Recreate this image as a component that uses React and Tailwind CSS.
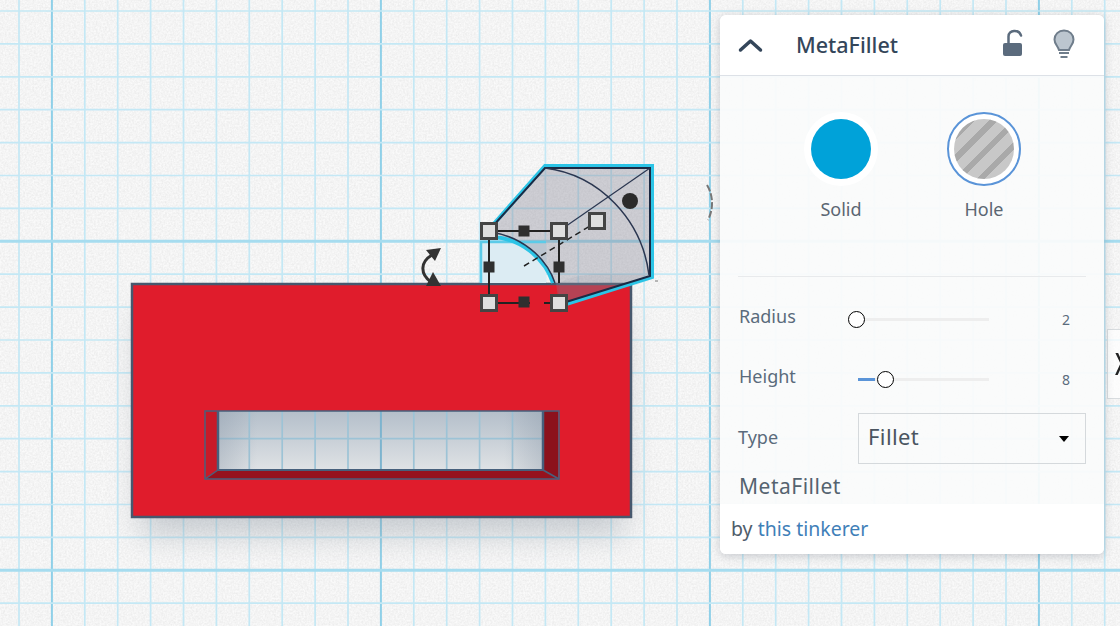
import React from 'react';

const font = { fontFamily: '"Noto Sans", "Open Sans", sans-serif' };

const vLines = Array.from({ length: 35 }, (_, i) => 19 + i * 32.9);
const hLines = Array.from({ length: 19 }, (_, i) => 11 + i * 32.9);

function GridLines({ minor = '#c4e8f5', major = '#8fd0e8' }) {
  return (
    <g filter="url(#soft)">
      {vLines.map((x, i) => (
        <line key={x} x1={x} y1="0" x2={x} y2="626" stroke={i % 10 === 1 ? major : minor} strokeWidth={i % 10 === 1 ? 2 : 1.7} />
      ))}
      {hLines.map((y, i) => (
        <line key={y} x1="0" y1={y} x2="1120" y2={y} stroke={i % 10 === 7 ? '#a6dcef' : minor} strokeWidth={i % 10 === 7 ? 3 : 1.7} />
      ))}
    </g>
  );
}

function Handle({ x, y }) {
  return <rect x={x - 7.5} y={y - 7.5} width="15" height="15" fill="#dedede" stroke="#444" strokeWidth="3" />;
}

function Dot({ x, y }) {
  return <rect x={x - 5.5} y={y - 5.5} width="11" height="11" fill="#2f2f2f" />;
}

function Workplane() {
  return (
    <svg className="absolute inset-0" width="1120" height="626" viewBox="0 0 1120 626">
      <defs>
        <filter id="soft"><feGaussianBlur stdDeviation="0.7" /></filter>
        <filter id="shadow" x="-20%" y="-20%" width="140%" height="140%"><feGaussianBlur stdDeviation="16" /></filter>
        <filter id="blur1"><feGaussianBlur stdDeviation="0.4" /></filter>
        <filter id="noise" x="0" y="0" width="100%" height="100%">
          <feTurbulence type="fractalNoise" baseFrequency="0.55" numOctaves="2" seed="4" />
          <feColorMatrix values="0 0 0 0 0.6  0 0 0 0 0.6  0 0 0 0 0.6  0.5 0 0 0 -0.12" />
        </filter>
        <linearGradient id="holeFill" x1="0" y1="0" x2="0" y2="1">
          <stop offset="0" stopColor="#b4bfca" />
          <stop offset="1" stopColor="#dfe2e5" />
        </linearGradient>
        <linearGradient id="holeEdge" x1="0" y1="0" x2="1" y2="0">
          <stop offset="0" stopColor="#8594a5" stopOpacity="0.35" />
          <stop offset="0.12" stopColor="#8594a5" stopOpacity="0" />
          <stop offset="0.88" stopColor="#8594a5" stopOpacity="0" />
          <stop offset="1" stopColor="#8594a5" stopOpacity="0.35" />
        </linearGradient>
        <clipPath id="holeClip"><rect x="218" y="411" width="325" height="59" /></clipPath>
        <clipPath id="quarterClip"><rect x="479" y="240" width="67" height="43" /></clipPath>
      </defs>

      <rect width="1120" height="626" fill="#fafafa" />
      <rect width="1120" height="626" filter="url(#noise)" />
      <GridLines />

      {/* soft shadow under the box */}
      <rect x="140" y="310" width="485" height="225" fill="#7a8794" opacity="0.38" filter="url(#shadow)" />

      {/* red box */}
      <rect x="132" y="284" width="499" height="233" fill="#e01c2c" stroke="#47586e" strokeWidth="2.5" />

      {/* slot */}
      <rect x="218" y="411" width="325" height="59" fill="url(#holeFill)" />
      <g clipPath="url(#holeClip)">
        <GridLines minor="#9dc3d6" major="#7db4cf" />
        <rect x="218" y="411" width="325" height="59" fill="url(#holeEdge)" />
      </g>
      <polygon points="206,411 218,411 218,470 206,479" fill="#c81a28" />
      <polygon points="543,411 558,411 558,479 543,470" fill="#8c111c" />
      <polygon points="218,470 543,470 558,479 206,479" fill="#96121e" />
      <g fill="none" stroke="#47607c" strokeWidth="1.5" filter="url(#blur1)">
        <rect x="205" y="411" width="354" height="68" />
        <line x1="218" y1="411" x2="218" y2="470" strokeWidth="2.5" />
        <line x1="543" y1="411" x2="543" y2="470" strokeWidth="2.5" />
        <line x1="218" y1="470" x2="543" y2="470" strokeWidth="2" />
        <line x1="218" y1="470" x2="205" y2="479" />
        <line x1="543" y1="470" x2="559" y2="479" />
      </g>

      {/* fillet shape */}
      <rect x="480" y="242" width="66" height="41" fill="#dcecf3" />
      <polygon points="545,167 650,167 650,276 559,304 556,283 545,262 525,246 489,231" fill="#7c7c8c" opacity="0.34" />
      <path d="M559,283 C585,270 610,275 649,275 L650,276 L559,304 Z" fill="#7a7f90" opacity="0.1" />
      <path d="M481,283 V242 H546" fill="none" stroke="#5ccbe8" strokeWidth="2.5" clipPath="url(#quarterClip)" />
      <path d="M493,237 C520,238 545,258 553,283" fill="none" stroke="#2cc4e6" strokeWidth="4" />
      <path d="M492,226 L545,166 H652 V277 L566,304" fill="none" stroke="#2cc4e6" strokeWidth="4" />
      <path d="M493,226 L545,168 H650 V276 L566,302" fill="none" stroke="#1b2a44" strokeWidth="2" />
      <path d="M545,168 C600,175 642,220 649,275" fill="none" stroke="#2a3650" strokeWidth="1.5" />
      <path d="M490,232 C520,236 546,256 555,283" fill="none" stroke="#2a3650" strokeWidth="1.5" />
      <line x1="559" y1="231" x2="650" y2="168" stroke="#2a3650" strokeWidth="1.2" />
      <line x1="524" y1="266" x2="590" y2="226" stroke="#222" strokeWidth="1.5" strokeDasharray="6 4" />
      <circle cx="630" cy="201" r="8" fill="#2b2b2b" />
      <line x1="655" y1="281" x2="658" y2="281" stroke="#777" />

      {/* transform handles */}
      <g stroke="#222" strokeWidth="2">
        <line x1="489" y1="231" x2="559" y2="231" />
        <line x1="489" y1="231" x2="489" y2="302" />
        <line x1="559" y1="231" x2="559" y2="283" />
        <line x1="489" y1="303" x2="530" y2="303" />
        <line x1="544" y1="303" x2="559" y2="303" />
      </g>
      <Dot x={524} y={231} />
      <Dot x={489} y={267} />
      <Dot x={559} y={267} />
      <Dot x={524} y={302} />
      <Handle x={489} y={231} />
      <Handle x={559} y={231} />
      <Handle x={489} y={303} />
      <Handle x={559} y={303} />
      <Handle x={597} y={221} />

      {/* rotate arrows */}
      <path d="M432,255 C420,262 420,274 431,282" fill="none" stroke="#333" strokeWidth="3" />
      <polygon points="441,248 426,250 435,261" fill="#333" />
      <polygon points="441,286 426,286 433,272" fill="#333" />
      <path d="M707,185 C713,195 714,208 708,220" fill="none" stroke="#777" strokeWidth="2" strokeDasharray="7 2" />
    </svg>
  );
}

function Slider({ label, value, knob, fill }) {
  return (
    <div className="flex items-center h-[60px]">
      <span className="w-[138px] pl-[19px] pb-[5px] text-[18px] text-[#5a6b7c]">{label}</span>
      <div className="relative w-[131px] h-[3px] bg-[#eeeeee]">
        {fill > 0 && <div className="h-full bg-[#5a94d8]" style={{ width: fill }} />}
        <div className="absolute top-[-7px] w-[17px] h-[17px] rounded-full bg-white border-[1.5px] border-black" style={{ left: knob }} />
      </div>
      <span className="w-[115px] pr-[34px] text-[14px] text-right text-[#5a6b7c]">{value}</span>
    </div>
  );
}

export default function App() {
  return (
    <div className="relative w-[1120px] h-[626px] overflow-hidden" style={font}>
      <Workplane />

      {/* tab sticking out on the right */}
      <div className="absolute left-[1107px] top-[329px] w-[30px] h-[70px] border border-[#d8dcdf] bg-white/70 flex items-center overflow-hidden">
        <span className="ml-[7px] text-[30px] leading-none font-medium text-[#222] scale-x-75 origin-left">X</span>
      </div>

      <div className="absolute left-[720px] top-[15px] w-[384px] h-[539px] rounded-md flex flex-col overflow-hidden shadow-[0_2px_10px_rgba(60,70,90,0.25)] bg-[#fafbfb]/[.94]">
        <div className="flex items-center h-[61px] bg-white border-b border-[#dde1e7] shrink-0">
          <svg className="ml-[18px]" width="25" height="16" viewBox="0 0 25 16">
            <path d="M2.5 13 L12.5 4 L22.5 13" fill="none" stroke="#34465a" strokeWidth="3.5" strokeLinecap="round" strokeLinejoin="round" />
          </svg>
          <span className="ml-[33px] text-[21.5px] font-medium text-[#34465a]">MetaFillet</span>
          <svg className="ml-auto -mt-[4px]" width="21" height="28" viewBox="0 0 21 28">
            <path d="M6.5 14 V7.5 C6.5 0.5 17 0 19 6.5" fill="none" stroke="#5b6b7d" strokeWidth="2.5" strokeLinecap="round" />
            <rect x="1" y="14" width="19" height="13" rx="2" fill="#5b6b7d" />
          </svg>
          <svg className="ml-[30px] mr-[29px] -mt-[3px]" width="22" height="30" viewBox="0 0 22 30">
            <path d="M11 1.5 C5.5 1.5 1.5 5.5 1.5 10.5 C1.5 15 4.5 16.5 6 21 H16 C17.5 16.5 20.5 15 20.5 10.5 C20.5 5.5 16.5 1.5 11 1.5 Z" fill="#bcc6cf" stroke="#6f7d8b" strokeWidth="2" />
            <rect x="6" y="23" width="10" height="2" fill="#6f7d8b" />
            <rect x="7.5" y="27" width="7" height="2" fill="#6f7d8b" />
          </svg>
        </div>

        <div className="flex-1 flex flex-col">
          <div className="flex justify-center gap-[69px] pt-[36px] pl-[1px]">
            <div className="flex flex-col items-center">
              <div className="w-[74px] h-[74px] rounded-full bg-white flex items-center justify-center">
                <div className="w-[60px] h-[60px] rounded-full bg-[#00a2d9]" />
              </div>
              <span className="mt-[10px] text-[18px] text-[#5b6672]">Solid</span>
            </div>
            <div className="flex flex-col items-center">
              <div className="w-[74px] h-[74px] rounded-full bg-white border-[2.5px] border-[#5a94d8] flex items-center justify-center">
                <div className="w-[60px] h-[60px] rounded-full bg-[repeating-linear-gradient(135deg,#c8c8c8_0,#c8c8c8_10px,#a9a9a9_10px,#a9a9a9_16px)]" />
              </div>
              <span className="mt-[10px] text-[18px] text-[#5b6672]">Hole</span>
            </div>
          </div>

          <div className="mx-[18px] mt-[53px] border-t border-[#e8eaec]" />

          <div className="mt-[12px]">
            <Slider label="Radius" value="2" knob={-10} fill={0} />
            <Slider label="Height" value="8" knob={19} fill={17} />
          </div>

          <div className="flex items-center mt-[4px]">
            <span className="w-[138px] pl-[18px] pb-[3px] text-[18px] text-[#5a6b7c]">Type</span>
            <div className="flex items-center w-[228px] h-[51px] border border-[#d5d9dc] pl-[9px] pr-[15px]">
              <span className="pb-[4px] text-[22px] text-[#4a5560] tracking-[0.4px]">Fillet</span>
              <svg className="ml-auto" width="12" height="7" viewBox="0 0 12 7"><polygon points="1,1 11,1 6,7" fill="#000" /></svg>
            </div>
          </div>

          <div className="mt-[6px] pl-[19px] text-[21px] leading-[32px] text-[#55636f] tracking-[0.5px]">MetaFillet</div>
        </div>

        <div className="h-[50px] bg-white flex items-center pl-[11px] text-[19.5px] text-[#4f5d6b] shrink-0">
          <span>by&nbsp;</span><span className="text-[#3f80b8]">this tinkerer</span>
        </div>
      </div>
    </div>
  );
}
